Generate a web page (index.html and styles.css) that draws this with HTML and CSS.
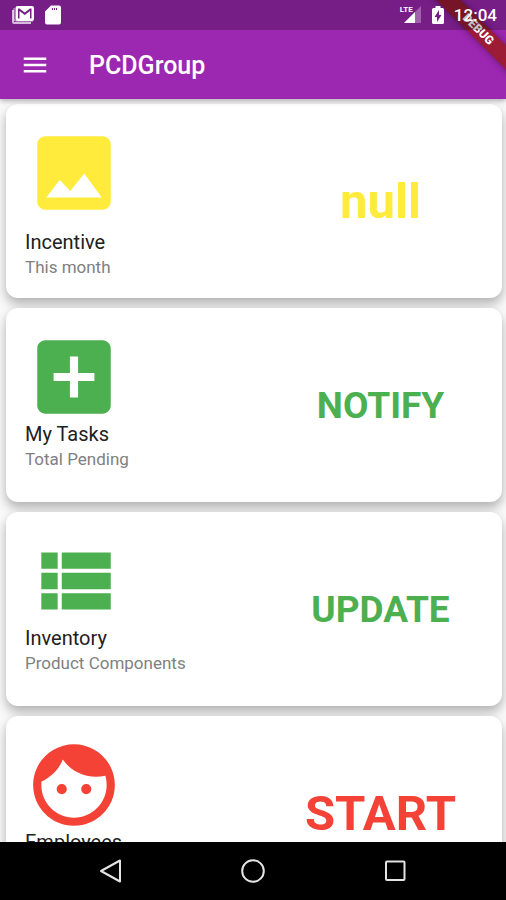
FILE: index.html
```html
<!DOCTYPE html>
<html lang="en">
<head>
<meta charset="utf-8">
<meta name="viewport" content="width=device-width, initial-scale=1">
<title>PCDGroup</title>
<link rel="stylesheet" href="styles.css">
</head>
<body>
<header class="header">
  <span class="debug-banner">DEBUG</span>
  <div class="status-bar">
    <div class="status-group status-left">
      <svg class="mail-icon" viewBox="0 0 24 20" aria-hidden="true">
        <path class="faded" d="M1 5v12q0 2 2 2h17v-2H3V5z"/>
        <path class="faded" d="M3 3v11q0 2 2 2h17" fill="none" stroke="#fff" stroke-width="1"/>
        <path fill-rule="evenodd" d="M6.500 1h14.500q2 0 2 2v11q0 2-2 2H6.500q-2 0-2-2V3q0-2 2-2zM7 3.500V13.500h1.500V6l5.250 4L19 6v7.500h1.500v-10H19L13.750 7.500 8.500 3.500z"/>
      </svg>
      <svg class="sd-icon" viewBox="0 0 16 20" aria-hidden="true">
        <path fill-rule="evenodd" d="M6 .5h8q2 0 2 2v15q0 2-2 2H2q-2 0-2-2V6.500zM7 3v2h1V3zM9 3v2h1V3zM11 3v2h1V3z"/>
      </svg>
    </div>
    <div class="status-group status-right">
      <div class="signal">
        <svg class="signal-icon" viewBox="0 0 18 18" aria-hidden="true">
          <path class="dim" d="M17 0v17H0z"/>
          <path d="M11 6v11H0z"/>
        </svg>
        <span class="lte">LTE</span>
      </div>
      <svg class="battery-icon" viewBox="0 0 12 18" aria-hidden="true">
        <path fill-rule="evenodd" d="M3.500 0h5v2H10.500Q12 2 12 3.500v13Q12 18 10.500 18h-9Q0 18 0 16.500v-13Q0 2 1.500 2h2zM7 4L2.500 11H5v5l4.500-7H7z"/>
      </svg>
      <time class="clock">12:04</time>
    </div>
  </div>
  <div class="app-bar">
    <button class="menu-button" type="button" aria-label="Open menu">
      <svg viewBox="0 0 24 24" aria-hidden="true"><path d="M3 18h18v-2H3zM3 13h18v-2H3zM3 8h18V6H3z"/></svg>
    </button>
    <h1 class="title">PCDGroup</h1>
  </div>
</header>

<main class="cards">
  <article class="card yellow">
    <div class="info">
      <svg class="card-icon" viewBox="0 0 24 24" aria-hidden="true"><path fill-rule="evenodd" d="M21 19V5c0-1.100-.9-2-2-2H5c-1.100 0-2 .9-2 2v14c0 1.100.9 2 2 2h14c1.100 0 2-.9 2-2zM8.500 13.700l2.600 2.700 3.400-4.300 4.300 5.900H5.200z"/></svg>
      <h2 class="label spaced">Incentive</h2>
      <p class="detail">This month</p>
    </div>
    <strong class="value large">null</strong>
  </article>
  <article class="card green">
    <div class="info">
      <svg class="card-icon" viewBox="0 0 24 24" aria-hidden="true"><path fill-rule="evenodd" d="M19 3H5c-1.100 0-2 .9-2 2v14c0 1.100.9 2 2 2h14c1.100 0 2-.9 2-2V5c0-1.100-.9-2-2-2zm-2 10h-4v4h-2v-4H7v-2h4V7h2v4h4z"/></svg>
      <h2 class="label">My Tasks</h2>
      <p class="detail">Total Pending</p>
    </div>
    <strong class="value">NOTIFY</strong>
  </article>
  <article class="card green">
    <div class="info">
      <svg class="card-icon" viewBox="0 0 24 24" aria-hidden="true"><path d="M4 14h4v-4H4zm0 5h4v-4H4zM4 9h4V5H4zm5 5h12v-4H9zm0 5h12v-4H9zM9 5v4h12V5z"/></svg>
      <h2 class="label">Inventory</h2>
      <p class="detail">Product Components</p>
    </div>
    <strong class="value">UPDATE</strong>
  </article>
  <article class="card red">
    <div class="info">
      <svg class="card-icon" viewBox="0 0 24 24" aria-hidden="true"><path fill-rule="evenodd" d="M9 11.750a1.250 1.250 0 1 0 0 2.500 1.250 1.250 0 0 0 0-2.500zm6 0a1.250 1.250 0 1 0 0 2.500 1.250 1.250 0 0 0 0-2.500zM12 2C6.480 2 2 6.480 2 12s4.480 10 10 10 10-4.480 10-10S17.520 2 12 2zm0 18c-4.410 0-8-3.590-8-8 0-.29.020-.58.050-.86 2.360-1.050 4.230-2.980 5.210-5.370C11.070 8.330 14.050 10 17.420 10c.78 0 1.530-.09 2.250-.26.210.71.330 1.470.33 2.260 0 4.410-3.590 8-8 8z"/></svg>
      <h2 class="label">Employees</h2>
    </div>
    <strong class="value large">START</strong>
  </article>
</main>

<nav class="nav-bar" aria-label="System navigation">
  <button class="nav-button" type="button" aria-label="Back">
    <svg viewBox="0 0 24 24"><path d="M21 1.500v21L2 12z"/></svg>
  </button>
  <button class="nav-button" type="button" aria-label="Home">
    <svg viewBox="0 0 24 24"><circle cx="12" cy="12" r="10.800"/></svg>
  </button>
  <button class="nav-button" type="button" aria-label="Recent apps">
    <svg viewBox="0 0 24 24"><rect x="3" y="2.500" width="18.500" height="18.500" rx="1"/></svg>
  </button>
</nav>
</body>
</html>
```

FILE: styles.css
```css
* {
  box-sizing: border-box;
}

body {
  display: flex;
  flex-direction: column;
  height: 100vh;
  margin: 0;
  background: #fafafa;
  font-family: Roboto, sans-serif;
}

button {
  display: flex;
  align-items: center;
  justify-content: center;
  padding: 0;
  border: 0;
  background: none;
}

h1,
h2,
p {
  margin: 0;
}

svg {
  display: block;
}

.header {
  position: relative;
  z-index: 1;
  overflow: clip;
  overflow-clip-margin: 12px;
  background: #9c27b0;
  box-shadow: 0 2px 5px rgba(0, 0, 0, 0.3);
  color: #fff;
}

.debug-banner {
  position: absolute;
  top: 21px;
  right: -34px;
  width: 124px;
  background: #9c1c35;
  box-shadow: 0 0 6px rgba(0, 0, 0, 0.4);
  font-size: 12px;
  font-weight: 900;
  line-height: 17px;
  text-align: center;
  transform: rotate(45deg);
}

.status-bar {
  position: relative;
  display: flex;
  align-items: center;
  justify-content: space-between;
  height: 30px;
  padding: 0 9px 0 11px;
  background: rgba(0, 0, 0, 0.24);
}

.status-group {
  display: flex;
  align-items: center;
  fill: #fff;
}

.status-left,
.status-right {
  gap: 10px;
}

.mail-icon {
  width: 24px;
  height: 20px;
}

.faded {
  opacity: 0.7;
}

.sd-icon {
  width: 16px;
  height: 20px;
}

.signal {
  position: relative;
  padding-left: 4px;
}

.signal-icon {
  width: 18px;
  height: 18px;
}

.dim {
  opacity: 0.3;
}

.lte {
  position: absolute;
  top: 0;
  left: 0;
  font-size: 8px;
  font-weight: 700;
  line-height: 8px;
}

.battery-icon {
  width: 12px;
  height: 18px;
}

.clock {
  font-size: 17px;
  font-weight: 500;
  line-height: 20px;
}

.app-bar {
  display: flex;
  align-items: center;
  gap: 39px;
  height: 69px;
  padding: 0 20px;
}

.menu-button svg {
  width: 30px;
  height: 30px;
  fill: #fff;
}

.title {
  padding-top: 2px;
  font-size: 25px;
  font-weight: 500;
  line-height: 32px;
}

.cards {
  display: flex;
  flex: 1;
  flex-direction: column;
  gap: 10px;
  min-height: 0;
  padding: 5px 4px 5px 6px;
  overflow-y: auto;
  scrollbar-width: none;
}

.card {
  display: grid;
  flex: none;
  grid-template-columns: 1fr 1fr;
  min-height: 194px;
  padding: 20px 3px 16px 19px;
  border-radius: 12px;
  background: #fff;
  box-shadow: 0 5px 8px rgba(0, 0, 0, 0.14), 0 6px 14px rgba(0, 0, 0, 0.18);
}

.yellow {
  color: #ffeb3b;
}

.green {
  color: #4caf50;
}

.red {
  color: #f44336;
}

.card-icon {
  width: 98px;
  height: 98px;
  fill: currentColor;
}

.label {
  margin-top: -4px;
  color: #212121;
  font-size: 20px;
  font-weight: 400;
  line-height: 25px;
}

.spaced {
  margin-top: 8px;
}

.detail {
  color: #808080;
  font-size: 17px;
  line-height: 25px;
}

.value {
  align-self: center;
  padding-bottom: 2px;
  font-size: 37px;
  font-weight: 700;
  line-height: 48px;
  text-align: center;
}

.large {
  font-size: 49px;
}

.nav-bar {
  position: relative;
  z-index: 1;
  display: grid;
  flex: none;
  grid-template-columns: repeat(3, 1fr);
  height: 58px;
  padding: 0 8%;
  background: #000;
}

.nav-button svg {
  width: 24px;
  height: 24px;
  fill: none;
  stroke: #e4e4e4;
  stroke-width: 2;
  stroke-linejoin: round;
}
```
